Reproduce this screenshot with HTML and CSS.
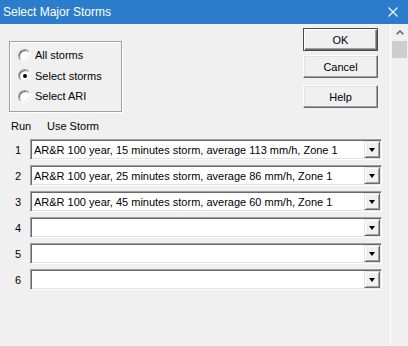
FILE: index.html
```html
<!DOCTYPE html>
<html>
<head>
<meta charset="utf-8">
<link rel="stylesheet" href="styles.css">
</head>
<body>
<div class="window">
  <div class="titlebar">
    <span class="title">Select Major Storms</span>
    <svg class="close" viewBox="0 0 10 10" width="10" height="10"><path d="M0.5 0.5 L9.5 9.5 M9.5 0.5 L0.5 9.5" stroke="#fff" stroke-width="1.1" fill="none"/></svg>
  </div>
  <div class="client">
    <div class="main">
      <div class="top">
        <div class="group">
          <div class="radio"><span class="circle"></span>All storms</div>
          <div class="radio"><span class="circle checked"></span>Select storms</div>
          <div class="radio"><span class="circle"></span>Select ARI</div>
        </div>
        <div class="buttons">
          <div class="btn default">OK</div>
          <div class="btn cancel">Cancel</div>
          <div class="btn help">Help</div>
        </div>
      </div>
      <div class="header"><span class="h-run">Run</span><span class="h-storm">Use Storm</span></div>
      <div class="rows">
        <div class="row"><span class="num">1</span><div class="combo"><span class="val">AR&amp;R 100 year, 15 minutes storm, average 113 mm/h, Zone 1</span><span class="drop"><span class="tri"></span></span></div></div>
        <div class="row"><span class="num">2</span><div class="combo"><span class="val">AR&amp;R 100 year, 25 minutes storm, average 86 mm/h, Zone 1</span><span class="drop"><span class="tri"></span></span></div></div>
        <div class="row"><span class="num">3</span><div class="combo"><span class="val">AR&amp;R 100 year, 45 minutes storm, average 60 mm/h, Zone 1</span><span class="drop"><span class="tri"></span></span></div></div>
        <div class="row"><span class="num">4</span><div class="combo"><span class="val"></span><span class="drop"><span class="tri"></span></span></div></div>
        <div class="row"><span class="num">5</span><div class="combo"><span class="val"></span><span class="drop"><span class="tri"></span></span></div></div>
        <div class="row"><span class="num">6</span><div class="combo"><span class="val"></span><span class="drop"><span class="tri"></span></span></div></div>
      </div>
    </div>
    <div class="scrollbar">
      <div class="arrow"><svg viewBox="0 0 8 5" width="8" height="5"><path d="M0.7 4.3 L4 1 L7.3 4.3" stroke="#606060" stroke-width="1.5" fill="none"/></svg></div>
      <div class="thumb"></div>
    </div>
  </div>
</div>
</body>
</html>
```

FILE: styles.css
```css
* { box-sizing: border-box; }
html, body { margin: 0; padding: 0; }
body {
  width: 408px;
  height: 346px;
  overflow: hidden;
  background: #f0f0f0;
  font-family: "Liberation Sans", Arial, sans-serif;
  font-size: 11px;
  color: #000;
}
.window { display: flex; flex-direction: column; height: 346px; }
.titlebar {
  height: 24px;
  flex: none;
  background: #2b7dcc;
  color: #fff;
  display: flex;
  align-items: center;
  padding-left: 3px;
  font-size: 12px;
}
.title { flex: 1; }
.close { margin-right: 10px; }
.client { flex: 1; display: flex; }
.main { width: 390px; }
.top { display: flex; justify-content: space-between; align-items: flex-start; }
.group {
  margin: 17px 0 0 9px;
  width: 113px;
  height: 71px;
  border: 1px solid #a0a0a0;
  box-shadow: 1px 1px 0 #fff, inset 1px 1px 0 #fff;
  padding: 3px 0 0 8px;
}
.radio { display: flex; align-items: center; height: 20.5px; }
.circle {
  position: relative;
  width: 13px;
  height: 13px;
  border-radius: 50%;
  background: #fff;
  border: 1px solid;
  border-color: #a0a0a0 #fff #fff #a0a0a0;
  box-shadow: inset 1px 1px 0 #696969, inset -1px -1px 0 #e3e3e3;
  margin-right: 4px;
}
.checked::after {
  content: "";
  position: absolute;
  left: 3.5px;
  top: 3.5px;
  width: 4px;
  height: 4px;
  border-radius: 50%;
  background: #000;
}
.buttons { display: flex; flex-direction: column; margin: 4px 12px 0 0; }
.btn {
  width: 75px;
  height: 23px;
  display: flex;
  align-items: center;
  justify-content: center;
  background: #f0f0f0;
  border: 1px solid;
  border-color: #fff #696969 #696969 #fff;
  box-shadow: inset -1px -1px 0 #a0a0a0, inset 1px 1px 0 #e3e3e3;
}
.btn.default {
  border-color: #4a4a4a;
  box-shadow: inset 1px 1px 0 #fff, inset -1px -1px 0 #696969, inset -2px -2px 0 #a0a0a0;
}
.btn.cancel { margin-top: 4px; }
.btn.help { margin-top: 7px; }
.header { display: flex; margin-top: 7px; height: 14px; line-height: 14px; padding-left: 11px; }
.h-run { width: 36px; }
.rows { display: flex; flex-direction: column; gap: 5px; margin-top: 6px; }
.row { display: flex; align-items: center; height: 21px; }
.num { width: 12px; margin-left: 12px; margin-right: 6px; text-align: center; }
.combo {
  width: 352px;
  height: 21px;
  display: flex;
  align-items: center;
  background: #fff;
  border: 1px solid;
  border-color: #a0a0a0 #fff #fff #a0a0a0;
  box-shadow: inset 1px 1px 0 #696969, inset -1px -1px 0 #e3e3e3;
  padding-left: 3px;
}
.val { flex: 1; white-space: nowrap; }
.drop {
  width: 16px;
  height: 17px;
  margin-right: 1px;
  display: flex;
  align-items: center;
  justify-content: center;
  background: #f0f0f0;
  border: 1px solid;
  border-color: #e3e3e3 #696969 #696969 #e3e3e3;
  box-shadow: inset 1px 1px 0 #fff, inset -1px -1px 0 #a0a0a0;
}
.tri {
  width: 0;
  height: 0;
  border-left: 3.5px solid transparent;
  border-right: 3.5px solid transparent;
  border-top: 4px solid #000;
}
.scrollbar { width: 18px; border-left: 1px solid #fff; }
.arrow { height: 17px; display: flex; align-items: center; justify-content: center; }
.thumb { margin-left: 1px; width: 15px; height: 17px; background: #cdcdcd; }
```
